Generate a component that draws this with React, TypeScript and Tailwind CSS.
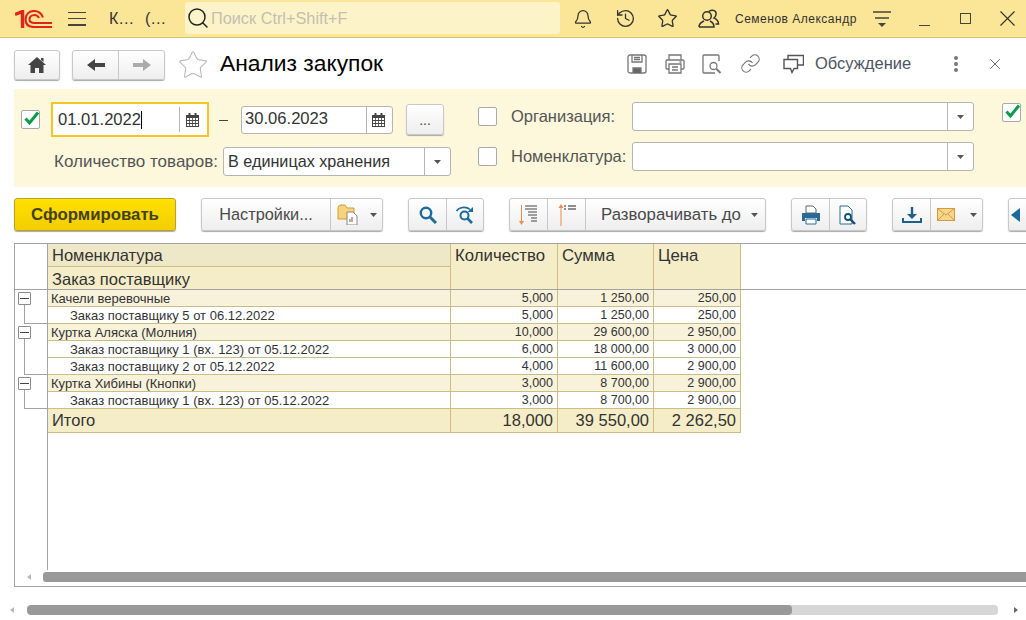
import { Bell, Star, History, Search, Link, X } from 'lucide-react';
import clsx from 'clsx';
import type { ReactNode } from 'react';

const BTN =
  'flex items-center justify-center border border-[#c8c8c8] bg-linear-to-b from-white to-[#eeeeee] shadow-[0_1px_1px_#a8a8a8] text-[#4a4a4a]';
const FIELD = 'flex bg-white border border-[#b5b5b5] rounded-[3px] text-[#333]';

const Caret = ({ className = '' }: { className?: string }) => (
  <svg width="7" height="4" viewBox="0 0 7 4" className={className}>
    <path d="M0 0h7L3.500 4z" fill="#555" />
  </svg>
);

function Checkbox({ checked = false, className = '' }: { checked?: boolean; className?: string }) {
  return (
    <div className={clsx('relative w-[19px] h-[19px] shrink-0 bg-white border border-[#a9a9a9] rounded-[2px]', className)}>
      {checked && (
        <svg width="20" height="18" viewBox="0 0 20 18" className="absolute left-0 -top-[2px]">
          <path d="M3.500 9.500l4 4.500L16 3.500" fill="none" stroke="#0c9a4c" strokeWidth="3" />
        </svg>
      )}
    </div>
  );
}

const CalendarIcon = () => (
  <svg width="13" height="14" viewBox="0 0 13 14">
    <path d="M0 2h13v12H0z" fill="#444" />
    <path d="M2.500 0h2v3h-2zM8.500 0h2v3h-2z" fill="#444" />
    <path d="M1 5h2.200v2H1zM4 5h2.200v2H4zM7 5h2.200v2H7zM10 5h2v2h-2zM1 8h2.200v2H1zM4 8h2.200v2H4zM7 8h2.200v2H7zM10 8h2v2h-2zM1 11h2.200v2H1zM4 11h2.200v2H4zM7 11h2.200v2H7zM10 11h2v2h-2z" fill="#fff" />
  </svg>
);

function DateField({ value }: { value: string }) {
  return (
    <div className={clsx(FIELD, 'h-full')}>
      <div className="flex-1 flex items-center pl-[3px] text-[16.6px]">{value}</div>
      <div className="w-[26px] pr-[2px] border-l border-[#b5b5b5] flex items-center justify-center">
        <CalendarIcon />
      </div>
    </div>
  );
}

function SelectField({ value, className }: { value?: string; className: string }) {
  return (
    <div className={clsx(FIELD, className)}>
      <div className="flex-1 flex items-center pl-[4px] text-[16.2px]">{value}</div>
      <div className="w-[26px] border-l border-[#b5b5b5] flex items-center justify-center">
        <Caret />
      </div>
    </div>
  );
}

const LOGO = (
  <svg width="37" height="18" viewBox="0 0 37 18" fill="none" stroke="#e2231a">
    <path d="M0 4.500L7.500 1.500V18" strokeWidth="3.400" />
    <path d="M28 7.500C26.500 3.500 23.500 1 19 1c-5 0-8.500 3.500-8.500 8.500s3.500 7.500 8.500 7.500h18" strokeWidth="2.100" />
    <path d="M24 8C23 6 21.500 5 19.500 5c-3 0-5 2-5 4.500s2 3.500 5 3.500H37" strokeWidth="2.100" />
  </svg>
);

const UsersIcon = () => (
  <svg width="22" height="20" viewBox="0 0 22 20" fill="none" stroke="#333" strokeWidth="1.500">
    <circle cx="9" cy="7" r="4.300" />
    <path d="M1 18c0-4 3-5 5-6M12 12c2 1 4 2 4 6H1" />
    <path d="M11 2.500c1-1.500 5-2 6.500 0 1.200 2 .5 5-1.500 6.500 2 1 4.500 2 4.500 6h-3" />
  </svg>
);

const FilterLines = () => (
  <svg width="18" height="18" viewBox="0 0 18 18" fill="none">
    <path d="M0 2h18M2 8h14" stroke="#444" strokeWidth="1.400" />
    <path d="M5 13h8l-4 4z" fill="#444" />
  </svg>
);

function TopBar() {
  return (
    <div className="h-[38px] shrink-0 flex items-center bg-[#fbe596] border-b border-[#d4c274] text-[#333]">
      <div className="ml-[15px] mt-px">{LOGO}</div>
      <div className="ml-[16px] w-[18px] h-[14px] flex flex-col justify-between">
        <div className="h-[1.500px] bg-[#444]" />
        <div className="h-[1.500px] bg-[#444]" />
        <div className="h-[1.500px] bg-[#444]" />
      </div>
      <span className="ml-[23px] w-[36px] text-[16px]">К…</span>
      <span className="w-[40px] text-[16px]">(…</span>
      <div className="h-[32px] -mt-px w-[375px] flex items-center bg-[#fdf3c9] rounded-[3px]">
        <Search size={24} strokeWidth={1.500} className="ml-[1px] text-[#222]" />
        <span className="ml-[1px] text-[16.300px] text-[#c4c0ae]">Поиск Ctrl+Shift+F</span>
      </div>
      <Bell size={20} strokeWidth={1.500} className="ml-[13px]" />
      <History size={21} strokeWidth={1.500} className="ml-[22px]" />
      <Star size={21} strokeWidth={1.500} className="ml-[21px]" />
      <div className="ml-[20px]"><UsersIcon /></div>
      <span className="ml-[15px] w-[122px] text-[12px] whitespace-nowrap tracking-[0.5px]">Семенов Александр</span>
      <div className="ml-[16px]"><FilterLines /></div>
      <div className="ml-[28px] mt-[14px] w-[11px] h-[1.500px] bg-[#444]" />
      <div className="ml-[30px] w-[11px] h-[11px] border-[1.500px] border-[#444]" />
      <X size={27} strokeWidth={1} className="ml-[23px]" />
    </div>
  );
}

const IconHome = () => (
  <svg width="18" height="16" viewBox="0 0 18 16">
    <path d="M9 0l9 8h-2.500v8H11v-5H7v5H2.500V8H0z" fill="#444" />
    <path d="M13 1h2.500v4L13 3z" fill="#444" />
  </svg>
);

const ArrowBack = ({ color }: { color: string }) => (
  <svg width="18" height="12" viewBox="0 0 18 12">
    <path d="M0 6l8-6v4h10v4H8v4z" fill={color} />
  </svg>
);

const IconSave = () => (
  <svg width="20" height="20" viewBox="0 0 20 20" fill="none" stroke="#777" strokeWidth="1.300">
    <rect x="1" y="1" width="18" height="18" rx="2" />
    <path d="M5 1v7h10V1M7 3.500h6M7 5.500h6" />
    <path d="M6 19v-5h8v5" fill="#666" />
  </svg>
);

const IconPrinter = () => (
  <svg width="20" height="20" viewBox="0 0 20 20" fill="none" stroke="#777" strokeWidth="1.300">
    <path d="M4 6V1h12v5" />
    <path d="M4 15H2a1 1 0 0 1-1-1V7a1 1 0 0 1 1-1h16a1 1 0 0 1 1 1v7a1 1 0 0 1-1 1h-2" />
    <path d="M4 10h12v9H4z" />
    <path d="M7 13h6M7 16h6M14.500 8h2" />
  </svg>
);

const IconPreview = () => (
  <svg width="20" height="20" viewBox="0 0 20 20" fill="none" stroke="#777" strokeWidth="1.300">
    <path d="M13 19H2a1 1 0 0 1-1-1V2a1 1 0 0 1 1-1h14a1 1 0 0 1 1 1v5" />
    <circle cx="11.500" cy="12" r="3.500" />
    <path d="M14.500 15l4 4" strokeWidth="2" />
  </svg>
);

const IconComment = () => (
  <svg width="21" height="20" viewBox="0 0 21 20" fill="none" stroke="#555" strokeWidth="1.400">
    <path d="M1 5.500h13.500v9H11l-2 4-1.500-4H1z" />
    <path d="M5 5V1.500h15.500v9.500h-6" />
  </svg>
);

function TitleRow() {
  return (
    <div className="h-[51px] shrink-0 flex items-center pl-[14px]">
      <div className={clsx(BTN, 'w-[46px] h-[30px] rounded-[3px] mt-[2px]')}>
        <IconHome />
      </div>
      <div className={clsx(BTN, 'ml-[12px] w-[93px] h-[30px] rounded-[3px] mt-[2px]')}>
        <div className="w-[46px] flex justify-center border-r border-[#c8c8c8] h-full items-center">
          <ArrowBack color="#444" />
        </div>
        <div className="flex-1 flex justify-center">
          <div className="rotate-180"><ArrowBack color="#ababab" /></div>
        </div>
      </div>
      <Star size={32} strokeWidth={0.800} className="ml-[12px] text-[#b9b9b9] mt-[2px]" />
      <span className="ml-[11px] w-[407px] text-[22.800px] text-black whitespace-nowrap">Анализ закупок</span>
      <IconSave />
      <div className="ml-[18px]"><IconPrinter /></div>
      <div className="ml-[17px]"><IconPreview /></div>
      <Link size={21} strokeWidth={1.300} className="ml-[18px] text-[#777]" />
      <div className="ml-[22px]"><IconComment /></div>
      <span className="ml-[11px] w-[96px] text-[16.500px] text-[#4c5563] whitespace-nowrap">Обсуждение</span>
      <div className="ml-[43px] flex flex-col gap-[2px]">
        <div className="w-[4px] h-[4px] rounded-full bg-[#777]" />
        <div className="w-[4px] h-[4px] rounded-full bg-[#777]" />
        <div className="w-[4px] h-[4px] rounded-full bg-[#777]" />
      </div>
      <X size={18} strokeWidth={1.200} className="ml-[28px] text-[#555]" />
    </div>
  );
}

function FilterPanel() {
  return (
    <div className="ml-[14px] h-[98px] shrink-0 flex bg-[#fdf8dc] text-[#555]">
      <div className="w-[464px] shrink-0 pt-[13px]">
        <div className="flex items-center h-[35px] pl-[7px]">
          <Checkbox checked />
          <div className="ml-[11px] w-[158px] h-[35px] border-[2px] border-[#f7c325] bg-white">
            <div className="flex h-full pl-[5px] text-[16.600px] text-[#333]">
              <div className="flex-1 flex items-center pt-[1px]">
                01.01.2022<span className="w-px h-[18px] bg-black" />
              </div>
              <div className="w-[28px] pr-[2px] my-[3px] border-l border-[#b5b5b5] flex items-center justify-center">
                <CalendarIcon />
              </div>
            </div>
          </div>
          <span className="ml-[10px] w-[9px] h-px bg-[#444] mt-[2px]" />
          <div className="ml-[13px] w-[152px] h-[28px]"><DateField value="30.06.2023" /></div>
          <div className={clsx(BTN, 'ml-[13px] w-[38px] h-[31px] rounded-[3px] items-end text-[14px] pb-[3px]')}>...</div>
        </div>
        <div className="flex items-center mt-[10px] h-[29px] pl-[40px]">
          <span className="w-[169px] text-[17px] whitespace-nowrap">Количество товаров:</span>
          <SelectField value="В единицах хранения" className="w-[228px] h-[29px]" />
        </div>
      </div>
      <div className="pt-[13px] flex flex-col gap-[11px]">
        {['Организация:', 'Номенклатура:'].map((label) => (
          <div key={label} className="flex items-center h-[29px]">
            <Checkbox />
            <span className="ml-[14px] w-[121px] text-[16.500px] whitespace-nowrap">{label}</span>
            <SelectField className="w-[342px] h-[29px]" />
          </div>
        ))}
      </div>
      <Checkbox checked className="ml-[28px] mt-[14px]" />
    </div>
  );
}

function Group({ children, className }: { children: ReactNode; className: string }) {
  return <div className={clsx(BTN, 'rounded-[3px] h-[33px] shrink-0', className)}>{children}</div>;
}

const Cell = ({ children, className = '' }: { children?: ReactNode; className?: string }) => (
  <div className={clsx('flex items-center justify-center h-full border-r border-[#c8c8c8] last:border-r-0', className)}>{children}</div>
);

const IconFolderReport = () => (
  <svg width="21" height="21" viewBox="0 0 21 21">
    <path d="M1 4a3 3 0 0 1 3-3h4l2 3h7v11H1z" fill="#f8d27c" stroke="#cf9f3a" />
    <path d="M10 8h6l4 4v9H10z" fill="#fff" stroke="#888" />
    <path d="M13 18v-3" stroke="#2a8a4a" />
    <path d="M15 18v-5" stroke="#c33" />
  </svg>
);

const IconZoom = () => (
  <svg width="18" height="18" viewBox="0 0 18 18" fill="none" stroke="#1d6a9c">
    <circle cx="7" cy="7" r="5.200" strokeWidth="2.400" />
    <path d="M11 11l6 6" strokeWidth="3" />
  </svg>
);

const IconZoomRefresh = () => (
  <svg width="20" height="18" viewBox="0 0 20 18" fill="none" stroke="#1d6a9c" strokeWidth="2">
    <circle cx="9.500" cy="9.500" r="4" />
    <path d="M12.500 12.500L17 17" strokeWidth="2.600" />
    <path d="M1.500 5C4 1 11 0 15 3.500" strokeWidth="1.600" />
    <path d="M18 1v5h-5.500z" fill="#1d6a9c" stroke="none" />
  </svg>
);

const IconSortDown = () => (
  <svg width="20" height="22" viewBox="0 0 20 22" fill="none">
    <path d="M2.500 1v19" stroke="#ef8a4c" />
    <path d="M0 17h5l-2.500 4z" fill="#ef8a4c" />
    <path d="M6 2h12M6 5h12M9 8h9M9 11h9M12 14h6M12 17h6" stroke="#444" />
  </svg>
);

const IconSortUp = () => (
  <svg width="20" height="22" viewBox="0 0 20 22" fill="none">
    <path d="M4 3v19" stroke="#ef8a4c" />
    <path d="M1.500 4h5L4 0z" fill="#ef8a4c" />
    <path d="M7 2h2M11 2h8M7 5h2M11 5h8" stroke="#222" />
  </svg>
);

const IconPrintBlue = () => (
  <svg width="20" height="20" viewBox="0 0 20 20">
    <path d="M5 1h7l3 3v4H5z" fill="#fff" stroke="#666" />
    <path d="M1 8h18v8h-3v-3H4v3H1z" fill="#2b6a96" />
    <path d="M5 14h10v5H5z" fill="#fff" stroke="#2b6a96" />
  </svg>
);

const IconDocZoom = () => (
  <svg width="20" height="20" viewBox="0 0 20 20" fill="none">
    <path d="M2 1h8l4 4v14H2z" fill="#fff" stroke="#2b6a96" />
    <circle cx="10" cy="12" r="3" fill="#fff" stroke="#154f78" strokeWidth="1.800" />
    <path d="M12.500 14.500L17 19" stroke="#154f78" strokeWidth="2.400" />
  </svg>
);

const IconDownload = () => (
  <svg width="20" height="18" viewBox="0 0 20 18" fill="none">
    <path d="M10 1v9" stroke="#1d5f8f" strokeWidth="2.400" />
    <path d="M5 8h10l-5 5z" fill="#1d5f8f" />
    <path d="M1 12v4h18v-4" stroke="#1d5f8f" strokeWidth="2" />
  </svg>
);

const IconMail = () => (
  <svg width="18" height="13" viewBox="0 0 18 13">
    <rect x="0.500" y="0.500" width="17" height="12" fill="#f6d58d" stroke="#d59a3a" />
    <path d="M1 1l8 6 8-6M1 12l6-6M17 12l-6-6" fill="none" stroke="#d59a3a" />
  </svg>
);

function Toolbar() {
  return (
    <div className="mt-[11px] h-[34px] shrink-0 flex pl-[14px]">
      <div className="w-[162px] h-[33px] flex items-center justify-center shrink-0 rounded-[3px] border border-[#b8a02a] bg-linear-to-b from-[#ffe000] to-[#f3ce00] shadow-[0_1px_1px_#a8a8a8] text-[16.800px] font-bold text-[#44401a]">
        Сформировать
      </div>
      <Group className="ml-[25px] w-[182px] text-[16.300px]">
        <Cell className="w-[129px]">Настройки...</Cell>
        <Cell className="flex-1 gap-[12px]"><IconFolderReport /><Caret /></Cell>
      </Group>
      <Group className="ml-[25px] w-[76px]">
        <Cell className="w-[38px]"><IconZoom /></Cell>
        <Cell className="flex-1"><IconZoomRefresh /></Cell>
      </Group>
      <Group className="ml-[25px] w-[257px] text-[16.800px]">
        <Cell className="w-[38px]"><IconSortDown /></Cell>
        <Cell className="w-[38px]"><IconSortUp /></Cell>
        <Cell className="flex-1 gap-[10px] pl-[8px]">Разворачивать до<Caret /></Cell>
      </Group>
      <Group className="ml-[25px] w-[76px]">
        <Cell className="w-[38px]"><IconPrintBlue /></Cell>
        <Cell className="flex-1"><IconDocZoom /></Cell>
      </Group>
      <Group className="ml-[25px] w-[91px]">
        <Cell className="w-[38px]"><IconDownload /></Cell>
        <Cell className="flex-1 gap-[15px]"><IconMail /><Caret /></Cell>
      </Group>
      <Group className="ml-[25px] w-[60px] justify-start pl-[2px]">
        <svg width="12" height="14" viewBox="0 0 12 14"><path d="M0 7l9-7v14z" fill="#1d6a9c" /></svg>
      </Group>
    </div>
  );
}

const GRID_LINE = 'border-[#cbbd84]';

type Row = { name: string; qty: string; sum: string; price: string };
type TreeGroup = Row & { orders: Row[] };

const GROUPS: TreeGroup[] = [
  {
    name: 'Качели веревочные', qty: '5,000', sum: '1 250,00', price: '250,00',
    orders: [{ name: 'Заказ поставщику 5 от 06.12.2022', qty: '5,000', sum: '1 250,00', price: '250,00' }],
  },
  {
    name: 'Куртка Аляска (Молния)', qty: '10,000', sum: '29 600,00', price: '2 950,00',
    orders: [
      { name: 'Заказ поставщику 1 (вх. 123) от 05.12.2022', qty: '6,000', sum: '18 000,00', price: '3 000,00' },
      { name: 'Заказ поставщику 2 от 05.12.2022', qty: '4,000', sum: '11 600,00', price: '2 900,00' },
    ],
  },
  {
    name: 'Куртка Хибины (Кнопки)', qty: '3,000', sum: '8 700,00', price: '2 900,00',
    orders: [{ name: 'Заказ поставщику 1 (вх. 123) от 05.12.2022', qty: '3,000', sum: '8 700,00', price: '2 900,00' }],
  },
];

function DataRow({ row, group }: { row: Row; group?: boolean }) {
  const num = clsx('flex items-center justify-end pr-[4px] pt-[1px] border-r text-[12.500px]', GRID_LINE);
  return (
    <div className={clsx('flex h-[17px] text-[13px] text-[#333] border-b w-[693px]', GRID_LINE, group ? 'bg-[#f8f2da]' : 'bg-white')}>
      <div className={clsx('w-[403px] flex items-center pt-[1px] border-r whitespace-nowrap', GRID_LINE, group ? 'pl-[3px]' : 'pl-[22px]')}>
        {row.name}
      </div>
      <div className={clsx(num, 'w-[107px]')}>{row.qty}</div>
      <div className={clsx(num, 'w-[96px]')}>{row.sum}</div>
      <div className={clsx(num, 'w-[87px]')}>{row.price}</div>
    </div>
  );
}

function Report() {
  const head = clsx('pl-[4px] pt-[2px] text-[16.800px] leading-[20px] border-r', GRID_LINE);
  return (
    <div className="ml-[14px] mt-[11px] w-[1030px] h-[344px] shrink-0 flex flex-col border border-[#a3a3a3] text-[#333]">
      <div className="flex h-[46px] shrink-0 border-b border-[#a3a3a3]">
        <div className="w-[33px] border-r border-[#a3a3a3]" />
        <div className={clsx('w-[403px] flex flex-col text-[16.500px] bg-[#f5edc8] border-r', GRID_LINE)}>
          <div className={clsx('h-[23px] flex items-center pl-[4px] bg-[#efe8c8] border-b', GRID_LINE)}>Номенклатура</div>
          <div className="flex-1 flex items-center pl-[4px] pb-[2px]">Заказ поставщику</div>
        </div>
        <div className={clsx(head, 'w-[107px] bg-[#f5edc8]')}>Количество</div>
        <div className={clsx(head, 'w-[96px] bg-[#f5edc8]')}>Сумма</div>
        <div className={clsx(head, 'w-[87px] bg-[#f5edc8]')}>Цена</div>
      </div>
      {GROUPS.map((g) => (
        <div key={g.name} className="flex shrink-0">
          <div className="w-[33px] flex flex-col pl-[3px] pt-[2px] border-r border-[#a3a3a3]">
            <div className="w-[13px] h-[13px] shrink-0 flex items-center justify-center border border-[#8c8c8c] rounded-[1px] bg-white">
              <div className="w-[9px] h-px bg-[#444]" />
            </div>
            <div className="ml-[6px] flex-1 border-l border-b border-[#a3a3a3]" />
          </div>
          <div>
            <DataRow row={g} group />
            {g.orders.map((o) => <DataRow key={o.name} row={o} />)}
          </div>
        </div>
      ))}
      <div className="flex h-[24px] shrink-0 text-[16.500px]">
        <div className="w-[33px] border-r border-[#a3a3a3]" />
        <div className={clsx('flex w-[693px] bg-[#f5edc8] border-b', GRID_LINE)}>
          <div className={clsx('w-[403px] flex items-center pl-[4px] border-r', GRID_LINE)}>Итого</div>
          <div className={clsx('w-[107px] flex items-center justify-end pr-[4px] border-r', GRID_LINE)}>18,000</div>
          <div className={clsx('w-[96px] flex items-center justify-end pr-[4px] border-r', GRID_LINE)}>39 550,00</div>
          <div className={clsx('w-[87px] flex items-center justify-end pr-[4px] border-r', GRID_LINE)}>2 262,50</div>
        </div>
      </div>
      <div className="flex-1 min-h-0 w-[33px] border-r border-[#a3a3a3]" />
      <div className="h-[16px] shrink-0 flex items-center pl-[11px] pb-[2px]">
        <svg width="5" height="6" viewBox="0 0 5 6"><path d="M5 0v6L1 3z" fill="#bbb" /></svg>
        <div className="ml-[12px] flex-1 h-[10px] rounded-l-[3px] bg-[#999]" />
      </div>
    </div>
  );
}

function PageScroll() {
  return (
    <div className="mt-[18px] h-[10px] shrink-0 flex items-center pl-[9px]">
      <svg width="5" height="6" viewBox="0 0 5 6"><path d="M5 0v6L1 3z" fill="#bbb" /></svg>
      <div className="ml-[13px] w-[971px] h-[10px] rounded-[4px] bg-[#d6d6d6] overflow-hidden">
        <div className="w-[765px] h-full rounded-[4px] bg-[#999]" />
      </div>
      <svg width="5" height="6" viewBox="0 0 5 6" className="ml-[16px]"><path d="M0 0v6l4-3z" fill="#666" /></svg>
    </div>
  );
}

export default function App() {
  return (
    <div className="w-[1026px] h-[620px] overflow-hidden flex flex-col bg-white font-['Liberation_Sans',Arial,sans-serif]">
      <TopBar />
      <TitleRow />
      <FilterPanel />
      <Toolbar />
      <Report />
      <PageScroll />
    </div>
  );
}
